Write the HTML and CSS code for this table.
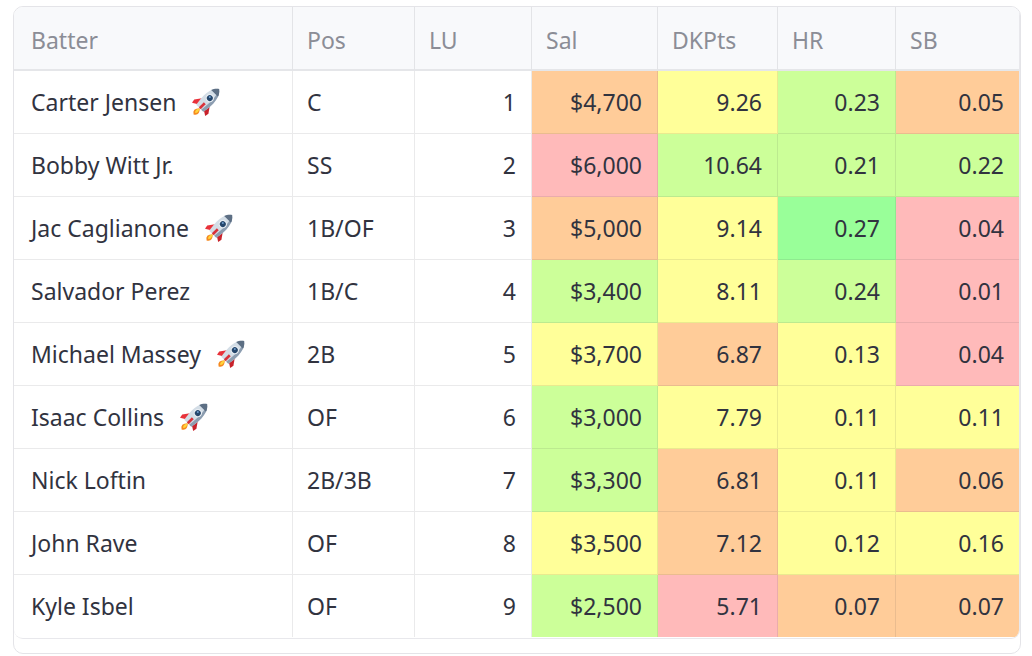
FILE: index.html
```html
<!DOCTYPE html>
<html lang="en">
<head>
<meta charset="utf-8">
<title>Batters</title>
<link rel="stylesheet" href="styles.css">
</head>
<body>
<svg width="0" height="0" class="defs" aria-hidden="true">
  <defs>
    <symbol id="rocket" viewBox="0 0 32 32">
      <g transform="rotate(45 16 16)">
        <path d="M16 26 Q11 31 16 34 Q21 31 16 26 Z" fill="#f5891f"/>
        <path d="M16 26 Q13.5 30 16 32 Q18.5 30 16 26 Z" fill="#ffd43b"/>
        <path d="M11.8 17 L6.8 24 L7.5 27.5 L12.2 24.5 Z" fill="#e8323a"/>
        <path d="M20.2 17 L25.2 24 L24.5 27.5 L19.8 24.5 Z" fill="#c8222b"/>
        <path d="M16 1 C22 5.5 22.6 14 20.6 26 L11.4 26 C9.4 14 10 5.5 16 1 Z" fill="#d3dde6"/>
        <path d="M16 1 C22 5.5 22.6 14 20.6 26 L17.8 26 C19.4 15 19.2 6.5 16 1 Z" fill="#8c9db0"/>
        <path d="M16 1 C18.4 2.9 19.7 4.8 20.4 6.8 L11.6 6.8 C12.3 4.8 13.6 2.9 16 1 Z" fill="#5d6f84"/>
        <circle cx="16" cy="13" r="3.8" fill="#e9eef3"/>
        <circle cx="16" cy="13" r="2.7" fill="#25466b"/>
        <circle cx="15.2" cy="12.2" r="0.9" fill="#6d9ccc"/>
        <path d="M14.8 26 L17.2 26 L17.2 19.5 L14.8 19.5 Z" fill="#d8313a"/>
      </g>
    </symbol>
  </defs>
</svg>
<div class="frame">
  <div class="grid">
    <div class="row head">
      <div class="cell first">Batter</div>
      <div class="cell">Pos</div>
      <div class="cell">LU</div>
      <div class="cell">Sal</div>
      <div class="cell">DKPts</div>
      <div class="cell">HR</div>
      <div class="cell last">SB</div>
    </div>

    <div class="row">
      <div class="cell first">Carter Jensen<svg class="rocket" viewBox="0 0 32 32"><use href="#rocket" width="32" height="32"/></svg></div>
      <div class="cell">C</div>
      <div class="cell num">1</div>
      <div class="cell num c-pe">$4,700</div>
      <div class="cell num c-ye">9.26</div>
      <div class="cell num c-lg">0.23</div>
      <div class="cell num last c-pe">0.05</div>
    </div>

    <div class="row">
      <div class="cell first">Bobby Witt Jr.</div>
      <div class="cell">SS</div>
      <div class="cell num">2</div>
      <div class="cell num c-pk">$6,000</div>
      <div class="cell num c-lg">10.64</div>
      <div class="cell num c-lg">0.21</div>
      <div class="cell num last c-lg">0.22</div>
    </div>

    <div class="row">
      <div class="cell first">Jac Caglianone<svg class="rocket" viewBox="0 0 32 32"><use href="#rocket" width="32" height="32"/></svg></div>
      <div class="cell">1B/OF</div>
      <div class="cell num">3</div>
      <div class="cell num c-pe">$5,000</div>
      <div class="cell num c-ye">9.14</div>
      <div class="cell num c-gr">0.27</div>
      <div class="cell num last c-pk">0.04</div>
    </div>

    <div class="row">
      <div class="cell first">Salvador Perez</div>
      <div class="cell">1B/C</div>
      <div class="cell num">4</div>
      <div class="cell num c-lg">$3,400</div>
      <div class="cell num c-ye">8.11</div>
      <div class="cell num c-lg">0.24</div>
      <div class="cell num last c-pk">0.01</div>
    </div>

    <div class="row">
      <div class="cell first">Michael Massey<svg class="rocket" viewBox="0 0 32 32"><use href="#rocket" width="32" height="32"/></svg></div>
      <div class="cell">2B</div>
      <div class="cell num">5</div>
      <div class="cell num c-ye">$3,700</div>
      <div class="cell num c-pe">6.87</div>
      <div class="cell num c-ye">0.13</div>
      <div class="cell num last c-pk">0.04</div>
    </div>

    <div class="row">
      <div class="cell first">Isaac Collins<svg class="rocket" viewBox="0 0 32 32"><use href="#rocket" width="32" height="32"/></svg></div>
      <div class="cell">OF</div>
      <div class="cell num">6</div>
      <div class="cell num c-lg">$3,000</div>
      <div class="cell num c-ye">7.79</div>
      <div class="cell num c-ye">0.11</div>
      <div class="cell num last c-ye">0.11</div>
    </div>

    <div class="row">
      <div class="cell first">Nick Loftin</div>
      <div class="cell">2B/3B</div>
      <div class="cell num">7</div>
      <div class="cell num c-lg">$3,300</div>
      <div class="cell num c-pe">6.81</div>
      <div class="cell num c-ye">0.11</div>
      <div class="cell num last c-pe">0.06</div>
    </div>

    <div class="row">
      <div class="cell first">John Rave</div>
      <div class="cell">OF</div>
      <div class="cell num">8</div>
      <div class="cell num c-ye">$3,500</div>
      <div class="cell num c-pe">7.12</div>
      <div class="cell num c-ye">0.12</div>
      <div class="cell num last c-ye">0.16</div>
    </div>

    <div class="row">
      <div class="cell first">Kyle Isbel</div>
      <div class="cell">OF</div>
      <div class="cell num">9</div>
      <div class="cell num c-lg">$2,500</div>
      <div class="cell num c-pk">5.71</div>
      <div class="cell num c-pe">0.07</div>
      <div class="cell num last c-pe">0.07</div>
    </div>
  </div>
</div>
</body>
</html>
```

FILE: styles.css
```css
html, body {
  margin: 0;
  padding: 0;
  background: #ffffff;
}

body {
  font-family: "Noto Sans", "DejaVu Sans", sans-serif;
  font-size: 23px;
  color: #31333f;
}

.defs {
  position: absolute;
  width: 0;
  height: 0;
  overflow: hidden;
}

.frame {
  box-sizing: border-box;
  width: 1008px;
  height: 648px;
  margin: 6px 0 0 13px;
  border: 1px solid #e4e4e8;
  border-radius: 10px;
  overflow: hidden;
}

.grid {
  width: 1006px;
  box-sizing: border-box;
  border-right: 1px solid #e8e8ec;
  border-bottom: 1px solid #e8e8ec;
  border-radius: 0 0 9px 9px;
  overflow: hidden;
}

.row {
  display: grid;
  grid-template-columns: 279px 122px 117px 126px 120px 118px 123px;
  height: 63px;
}

.row:last-child .cell {
  border-bottom: none;
  height: 62px;
}

.cell {
  box-sizing: border-box;
  display: flex;
  align-items: center;
  padding: 0 14px;
  border-right: 1px solid rgba(49, 51, 63, 0.1);
  border-bottom: 1px solid rgba(49, 51, 63, 0.1);
  white-space: nowrap;
  height: 63px;
}

.cell.first {
  padding-left: 17px;
}

.cell.last {
  border-right: none;
}

.cell.num {
  justify-content: flex-end;
  padding-right: 15px;
}

.head {
  height: 64px;
  background: #f8f9fb;
}

.head .cell {
  height: 64px;
  color: #8b8d96;
  padding-top: 3px;
  border-bottom: 2px solid rgba(49, 51, 63, 0.09);
}

.rocket {
  width: 35px;
  height: 35px;
  margin-left: 14px;
  margin-top: -4px;
  flex: none;
}

.c-pe { background: #ffcc99; }
.c-ye { background: #ffff99; }
.c-lg { background: #ccff99; }
.c-gr { background: #99ff99; }
.c-pk { background: #ffbaba; }
```
